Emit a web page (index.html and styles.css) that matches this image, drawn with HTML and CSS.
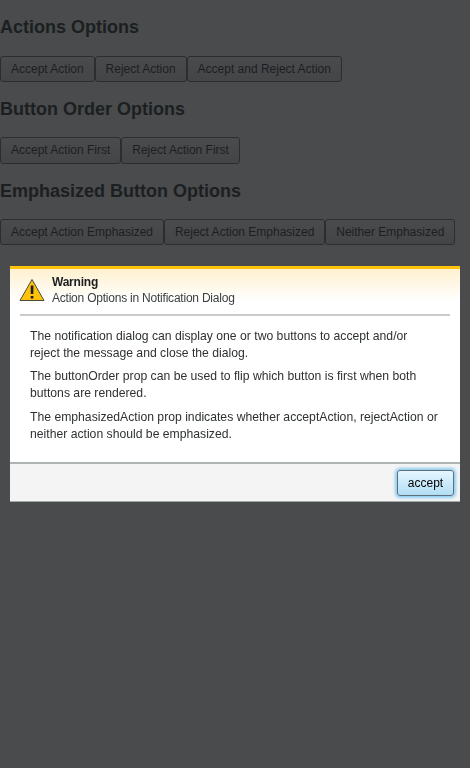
FILE: index.html
```html
<!DOCTYPE html>
<html lang="en">
<head>
<meta charset="utf-8">
<title>Notification Dialog</title>
<link rel="stylesheet" href="styles.css">
</head>
<body>
<main>
<h2>Actions Options</h2>
<div class="row"><button>Accept Action</button><button>Reject Action</button><button>Accept and Reject Action</button></div>
<h2>Button Order Options</h2>
<div class="row"><button>Accept Action First</button><button>Reject Action First</button></div>
<h2>Emphasized Button Options</h2>
<div class="row"><button>Accept Action Emphasized</button><button>Reject Action Emphasized</button><button>Neither Emphasized</button></div>
</main>
<div class="overlay">
<section class="dialog" role="alertdialog">
<header class="header">
<svg class="icon" viewBox="0 0 26 24" width="26" height="24"><path d="M13 1.5 25 22.5H1Z" fill="#ffc20a" stroke="#4e4a35" stroke-linejoin="round"/><path d="M11.7 7.5h2.7v8.5h-2.7zM11.7 18h2.7v2.6h-2.7z" fill="#1c1f21"/></svg>
<div class="titles"><strong>Warning</strong><span>Action Options in Notification Dialog</span></div>
</header>
<div class="body">
<p>The notification dialog can display one or two buttons to accept and/or reject the message and close the dialog.</p>
<p>The buttonOrder prop can be used to flip which button is first when both buttons are rendered.</p>
<p>The emphasizedAction prop indicates whether acceptAction, rejectAction or neither action should be emphasized.</p>
</div>
<footer class="footer"><button class="accept">accept</button></footer>
</section>
</div>
</body>
</html>
```
FILE: styles.css
```css
* { box-sizing: border-box; }
html, body { height: 100%; }
body { margin: 0; overflow: hidden; background: #494b4c; color: #1c1f21; font: 12px/17px "Liberation Sans", Arial, sans-serif; }
main { display: flow-root; padding-top: 0.3px; }
h2 { margin: 16px 0 17.25px; font-size: 18px; line-height: 22px; }
.row { display: flex; height: 26.4px; }
.row button { padding: 0 9.96px; border: 1px solid #2b2e30; border-radius: 3px; background: linear-gradient(#4a4b4d, #444547); color: #1c1f21; font: 12px/24px "Liberation Sans", Arial, sans-serif; }
.overlay { position: fixed; inset: 0; display: flex; align-items: center; justify-content: center; }
.dialog { width: 450px; height: 236px; display: flex; flex-direction: column; background: #fff; border-top: 3px solid #ffc20a; border-bottom: 1px solid #a3a8a9; }
.header { display: flex; padding: 5px 10px 0; height: 45px; background: linear-gradient(#fff1cf, #fff 32px); }
.icon { margin: 4px 7px 0 -1px; }
.titles { display: flex; flex-direction: column; line-height: 16px; letter-spacing: -0.22px; }
.titles span { color: #383f42; }
.body { flex: 1; margin: 0 10px; padding: 12px 10px 0; border-top: 2px solid #c8cacb; color: #2e3133; font-size: 12.2px; line-height: 17px; }
.body p { margin: 0 0 6.4px; }
.footer { display: flex; justify-content: flex-end; height: 39px; padding: 6px 6px 0; background: #f4f4f4; border-top: 2px solid #aeb3b4; }
.accept { width: 57px; height: 26px; padding: 0; border: 1px solid #5c707b; border-radius: 3px; background: linear-gradient(#e6f6ff, #b2ddf5); box-shadow: 0 0 3px 2px #8dcdf0; color: #000; font: 12px "Liberation Sans", Arial, sans-serif; }
```
